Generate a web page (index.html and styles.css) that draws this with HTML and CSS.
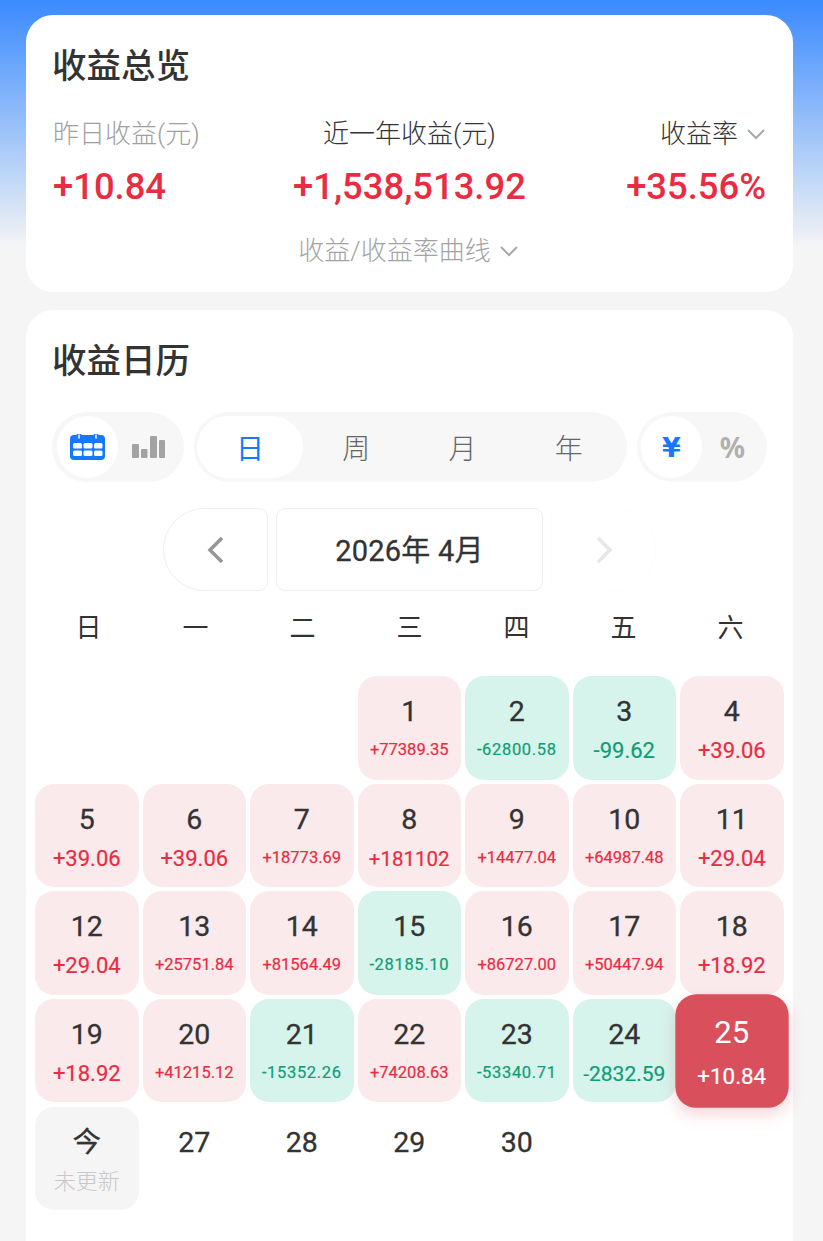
FILE: index.html
```html
<!DOCTYPE html>
<html lang="zh-CN">
<head>
<meta charset="utf-8">
<title>收益日历</title>
<link rel="stylesheet" href="styles.css">
</head>
<body>
<main class="page">
  <section class="card overview">
    <h2 class="title">收益总览</h2>
    <div class="stats">
      <div class="stat stat-left">
        <div class="label muted">昨日收益(元)</div>
        <div class="value">+10.84</div>
      </div>
      <div class="stat stat-mid">
        <div class="label">近一年收益(元)</div>
        <div class="value">+1,538,513.92</div>
      </div>
      <div class="stat stat-right">
        <div class="label">收益率<svg class="chev" viewBox="0 0 20 12"><path d="M2 2l8 8 8-8"/></svg></div>
        <div class="value">+35.56%</div>
      </div>
    </div>
    <div class="curve">收益/收益率曲线<svg class="chev" viewBox="0 0 20 12"><path d="M2 2l8 8 8-8"/></svg></div>
  </section>

  <section class="card calendar">
    <h2 class="title">收益日历</h2>
    <div class="toolbar">
      <div class="seg seg-view">
        <div class="opt on">
          <svg class="ico" width="35" height="26" viewBox="0 0 35 26"><rect y="1" width="35" height="25" rx="4" fill="#1677ff"/><path fill="none" stroke="#1677ff" stroke-width="4.500" stroke-linecap="round" d="M9 0v4M26 0v4"/><path fill="none" stroke="#fff" stroke-width="1.500" stroke-linecap="round" d="M9 1v3M26 1v3"/><g fill="#fff"><rect x="3" y="9" width="9" height="5.500" rx="1.500"/><rect x="13.500" y="9" width="9" height="5.500" rx="1.500"/><rect x="24" y="9" width="8.500" height="5.500" rx="1.500"/><rect x="3" y="16.500" width="9" height="5.500" rx="1.500"/><rect x="13.500" y="16.500" width="9" height="5.500" rx="1.500"/><rect x="24" y="16.500" width="8.500" height="5.500" rx="1.500"/></g></svg>
        </div>
        <div class="opt">
          <svg class="ico" width="33" height="22" viewBox="0 0 33 22"><g fill="#a3a3a3"><rect y="8" width="7" height="14" rx="1"/><rect x="9" y="13" width="6.500" height="9" rx="1"/><rect x="18" y="0" width="7" height="22" rx="1"/><rect x="27" y="4" width="6" height="18" rx="1"/></g></svg>
        </div>
      </div>
      <div class="seg seg-range">
        <div class="opt on">日</div>
        <div class="opt">周</div>
        <div class="opt">月</div>
        <div class="opt">年</div>
      </div>
      <div class="seg seg-unit">
        <div class="opt on yen">¥</div>
        <div class="opt pct">%</div>
      </div>
    </div>

    <div class="nav">
      <button class="nav-btn prev"><svg class="arrow" width="18" height="28" viewBox="0 0 18 28"><path d="M15 2L3 14l12 12"/></svg></button>
      <div class="month">2026年 4月</div>
      <button class="nav-btn next"><svg class="arrow" width="18" height="28" viewBox="0 0 18 28"><path d="M3 2l12 12L3 26"/></svg></button>
    </div>

    <div class="weekdays">
      <span>日</span><span>一</span><span>二</span><span>三</span><span>四</span><span>五</span><span>六</span>
    </div>

    <div class="grid">
      <div class="day none"></div><div class="day none"></div><div class="day none"></div>
      <div class="day up"><b>1</b><i class="sm">+77389.35</i></div>
      <div class="day down"><b>2</b><i class="sm">-62800.58</i></div>
      <div class="day down"><b>3</b><i>-99.62</i></div>
      <div class="day up"><b>4</b><i>+39.06</i></div>
      <div class="day up"><b>5</b><i>+39.06</i></div>
      <div class="day up"><b>6</b><i>+39.06</i></div>
      <div class="day up"><b>7</b><i class="sm">+18773.69</i></div>
      <div class="day up"><b>8</b><i class="six">+181102</i></div>
      <div class="day up"><b>9</b><i class="sm">+14477.04</i></div>
      <div class="day up"><b>10</b><i class="sm">+64987.48</i></div>
      <div class="day up"><b>11</b><i>+29.04</i></div>
      <div class="day up"><b>12</b><i>+29.04</i></div>
      <div class="day up"><b>13</b><i class="sm">+25751.84</i></div>
      <div class="day up"><b>14</b><i class="sm">+81564.49</i></div>
      <div class="day down"><b>15</b><i class="sm">-28185.10</i></div>
      <div class="day up"><b>16</b><i class="sm">+86727.00</i></div>
      <div class="day up"><b>17</b><i class="sm">+50447.94</i></div>
      <div class="day up"><b>18</b><i>+18.92</i></div>
      <div class="day up"><b>19</b><i>+18.92</i></div>
      <div class="day up"><b>20</b><i class="sm">+41215.12</i></div>
      <div class="day down"><b>21</b><i class="sm">-15352.26</i></div>
      <div class="day up"><b>22</b><i class="sm">+74208.63</i></div>
      <div class="day down"><b>23</b><i class="sm">-53340.71</i></div>
      <div class="day down"><b>24</b><i class="md">-2832.59</i></div>
      <div class="day current"><b>25</b><i>+10.84</i></div>
      <div class="day today"><b>今</b><i>未更新</i></div>
      <div class="day"><b>27</b></div>
      <div class="day"><b>28</b></div>
      <div class="day"><b>29</b></div>
      <div class="day"><b>30</b></div>
    </div>
  </section>
</main>
</body>
</html>
```

FILE: styles.css
```css
* { box-sizing: border-box; }
html, body { margin: 0; padding: 0; height: 100%; }
body {
  background: linear-gradient(#3a8aff 0, #f5f5f5 248px, #f5f5f5 100%);
  font-family: Roboto, "Noto Sans CJK SC", sans-serif;
  color: #333;
  overflow: hidden;
}
.page { height: 1241px; padding: 15px 30px 0 26px; display: flex; flex-direction: column; gap: 18px; overflow: hidden; }
.card { background: #fff; border-radius: 27px; }
.overview { height: 277px; padding: 26px 27px 0; flex: none; }
.calendar { flex: 1; border-radius: 27px 27px 0 0; padding: 26px 9px 0; }
.title { margin: 0 0 0 -1px; font-size: 34.500px; line-height: 50px; font-weight: 500; color: #333; }
.calendar .title { padding-left: 18px; }

.stats { display: flex; justify-content: space-between; margin-top: 24px; }
.stat { display: flex; flex-direction: column; gap: 11px; }
.stat-mid { align-items: center; margin-right: 7px; }
.stat-right { align-items: flex-end; }
.label { font-size: 26px; line-height: 38px; color: #333; display: flex; align-items: center; font-weight: 300; white-space: nowrap; }
.label.muted { color: #a0a0a0; }
.value { font-size: 36.400px; line-height: 46px; font-weight: 500; color: #e92c42; white-space: nowrap; }
.chev { width: 20px; height: 12px; margin-left: 8px; fill: none; stroke: #a8a8a8; stroke-width: 2; }
.curve { display: flex; justify-content: center; align-items: center; margin-top: 22px; font-size: 26px; line-height: 38px; color: #a3a3a3; font-weight: 300; padding-right: 2px; }

.toolbar { display: flex; margin: 26px 0 0 17px; width: 715px; justify-content: space-between; }
.seg { height: 70px; border-radius: 35px; background: #f7f7f7; padding: 4px 5px; display: flex; }
.seg-view { width: 132px; }
.seg-range { width: 433px; padding: 4px 5px 4px 3px; }
.seg-unit { width: 130px; padding: 4px; }
.opt { flex: 1; display: flex; align-items: center; justify-content: center; border-radius: 31px; font-size: 28px; font-weight: 300; color: #666; }
.opt.on { background: #fff; color: #1677ff; font-weight: 400; }
.opt.yen { font-family: "DejaVu Sans", sans-serif; font-size: 27px; font-weight: 700; }
.pct { font-family: "Noto Sans", sans-serif; font-size: 28px; font-weight: 700; color: #b0b0b0; }

.nav { display: flex; justify-content: center; gap: 8px; margin-top: 26px; height: 83px; }
.nav-btn { width: 105px; padding: 0; background: #fff; display: flex; align-items: center; justify-content: center; border: 1px solid #eee; }
.prev { border-radius: 42px 9px 9px 42px; }
.next { border-radius: 9px 42px 42px 9px; border-color: #fdfdfd; }
.arrow { fill: none; stroke-width: 3.500; }
.prev .arrow { stroke: #969696; }
.next .arrow { stroke: #e6e6e6; }
.month { width: 267px; border: 1px solid #eee; border-radius: 9px; display: flex; align-items: center; justify-content: center; padding-bottom: 3px; font-size: 29px; font-weight: 400; letter-spacing: .2px; -webkit-text-stroke: .3px #333; color: #333; }

.weekdays { display: grid; grid-template-columns: repeat(7, 107px); margin-top: 16px; height: 42px; font-size: 26px; line-height: 42px; text-align: center; color: #333; }

.grid { display: grid; grid-template-columns: repeat(7, 103.500px); grid-auto-rows: 103.500px; gap: 4.150px 4px; margin-top: 27px; }
.day { border-radius: 19px; display: flex; flex-direction: column; align-items: center; padding-top: 17px; }
.day b { font-size: 28.500px; line-height: 38px; font-weight: 400; color: #333; -webkit-text-stroke: .3px #333; }
.day i { font-style: normal; font-size: 22px; line-height: 38px; font-weight: 400; white-space: nowrap; padding-top: 1px; -webkit-text-stroke: .2px currentColor; }
.day i.sm { font-size: 16.500px; padding-top: 0; }
.down i.sm { letter-spacing: .65px; }
.day i.six { font-size: 20.500px; }
.day i.md { font-size: 21px; }
.up { background: #fbeaec; color: #e92c42; }
.down { background: #d6f4ec; color: #0f9d76; }
.current { background: #da4f5c; color: #fff; transform: scale(1.09); box-shadow: 0 6px 14px rgba(218, 79, 92, .22); position: relative; }
.current b { color: #fff; -webkit-text-stroke: 0; }
.current i { font-size: 20.500px; }
.today { background: #f5f5f5; color: #c8c8c8; }
.today i { font-weight: 300; -webkit-text-stroke: 0; }
```
